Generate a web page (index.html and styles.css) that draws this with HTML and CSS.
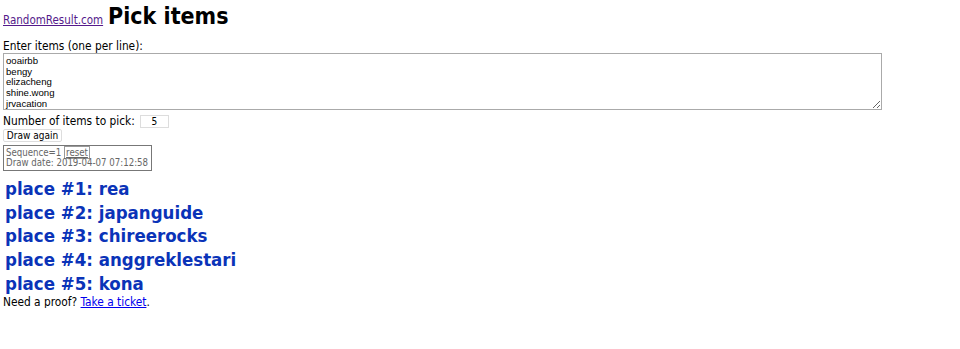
FILE: index.html
```html
<!DOCTYPE html>
<html>
<head>
<meta charset="utf-8">
<link rel="stylesheet" href="styles.css">
</head>
<body>
<div class="header">
  <a class="site" href="#">RandomResult.com</a>
  <h1 class="title">Pick items</h1>
</div>
<div class="label">Enter items (one per line):</div>
<textarea class="items">ooairbb
bengy
elizacheng
shine.wong
jrvacation</textarea>
<div class="row">
  <span>Number of items to pick:</span>
  <input class="count" type="text" value="5">
</div>
<button class="draw">Draw again</button>
<div class="info">
  <div>Sequence=1 <a class="reset" href="#">reset</a></div>
  <div>Draw date: 2019-04-07 07:12:58</div>
</div>
<div class="results">
  <div class="place">place #1: rea</div>
  <div class="place">place #2: japanguide</div>
  <div class="place">place #3: chireerocks</div>
  <div class="place">place #4: anggreklestari</div>
  <div class="place">place #5: kona</div>
</div>
<div class="proof">Need a proof? <a href="#">Take a ticket</a>.</div>
</body>
</html>
```
FILE: styles.css
```css
body {
  margin: 3px;
  font-family: "DejaVu Sans Condensed", "DejaVu Sans", Verdana, sans-serif;
  font-size: 11.8px;
  color: #000;
  background: #fff;
}
.header {
  display: flex;
  align-items: baseline;
  gap: 5px;
  height: 27px;
}
.site {
  color: #551a8b;
  font-size: 11.5px;
}
.title {
  margin: 0;
  font-size: 23px;
  font-weight: bold;
  line-height: 27px;
}
.label {
  margin-top: 9px;
  font-size: 11.8px;
  line-height: 14px;
}
.items {
  display: block;
  box-sizing: border-box;
  width: 879px;
  height: 57px;
  margin: 0;
  padding: 2px 2px;
  border: 1px solid #aaa;
  font-family: "Liberation Sans", Arial, sans-serif;
  font-size: 9.6px;
  line-height: 10.7px;
  resize: both;
  overflow: hidden;
}
.row {
  display: flex;
  align-items: center;
  gap: 5px;
  margin-top: 4px;
  height: 14px;
}
.count {
  box-sizing: border-box;
  width: 29px;
  height: 13px;
  border: 1px solid #ddd;
  padding: 0 2px;
  font-family: "DejaVu Sans Condensed", "DejaVu Sans", sans-serif;
  font-size: 10px;
  line-height: 11px;
  text-align: center;
}
.draw {
  display: block;
  margin-top: 1px;
  box-sizing: border-box;
  width: 59px;
  height: 13px;
  padding: 0;
  border: 1px solid #ddd;
  border-radius: 2px;
  background: #fff;
  font-family: "DejaVu Sans Condensed", "DejaVu Sans", sans-serif;
  font-size: 10px;
  line-height: 11px;
  color: #000;
}
.info {
  margin-top: 3px;
  box-sizing: border-box;
  width: 149px;
  border: 1px solid #777;
  padding: 2px 2px 2px;
  font-size: 9.6px;
  line-height: 10px;
  color: #666;
  white-space: nowrap;
}
.reset {
  color: #666;
  border: 1px solid #999;
  padding: 0 1px;
}
.results {
  margin-top: 6px;
  padding-left: 2px;
}
.place {
  font-size: 18.5px;
  font-weight: bold;
  color: #0a33b8;
  line-height: 23.7px;
}
.proof {
  font-size: 11.8px;
  line-height: 12px;
}
.proof a {
  color: #0000ee;
}
```
